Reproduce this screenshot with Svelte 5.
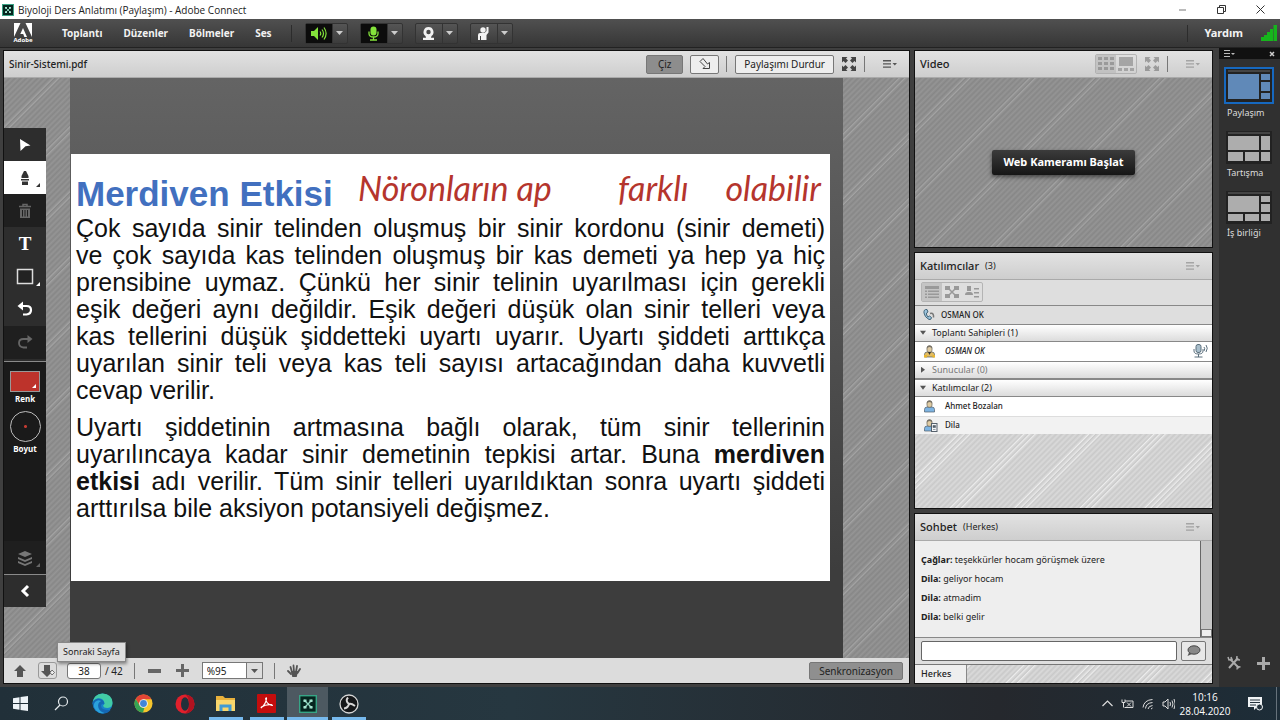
<script>
    const menus = ["Toplantı", "Düzenler", "Bölmeler", "Ses"];
    const devices = [
        { name: "Hoparlör", icon: "speaker", on: true },
        { name: "Mikrofon", icon: "mic", on: true },
        { name: "Kamera", icon: "webcam", on: false },
        { name: "El Kaldır", icon: "raise", on: false },
    ];
    const tools = [
        { name: "Seç", icon: "pointer" },
        { name: "Kalem", icon: "pen", selected: true, more: true },
        { name: "Sil", icon: "trash", off: true },
        { name: "Metin", icon: "text" },
        { name: "Şekil", icon: "rect", more: true },
        { name: "Geri Al", icon: "undo" },
        { name: "Yinele", icon: "redo", off: true },
    ];
    const messages = [
        { from: "Çağlar", text: "teşekkürler hocam görüşmek üzere" },
        { from: "Dila", text: "geliyor hocam" },
        { from: "Dila", text: "atmadim" },
        { from: "Dila", text: "belki gelir" },
    ];
    const layouts = [
        { name: "Paylaşım", boxes: [[2, 5, 31, 25], [35, 5, 9, 6], [35, 13, 9, 9], [35, 24, 9, 6]] },
        { name: "Tartışma", boxes: [[2, 5, 31, 14], [35, 5, 9, 14], [2, 21, 15, 9], [19, 21, 14, 9], [35, 21, 9, 9]] },
        { name: "İş birliği", boxes: [[2, 5, 31, 16], [35, 5, 9, 6], [35, 13, 9, 8], [2, 23, 15, 7], [19, 23, 14, 7], [35, 23, 9, 7]] },
    ];
    const apps = ["start", "search", "edge", "chrome", "opera", "folder", "acrobat", "connect", "obs"];
    const running = ["folder", "acrobat", "connect", "obs"];
    let activeLayout = $state("Paylaşım");
    let page = $state("38");
    let zoom = $state("%95");
    let draft = $state("");
</script>

{#snippet expand()}
    <svg width="14" height="14" viewBox="0 0 14 14" fill="currentColor">
        <path d="M0 0h5.500L4 1.500 6 3.500 3.500 6 1.500 4 0 5.500zM14 0v5.500L12.500 4l-2 2L8 3.500l2-2L8.500 0zM0 14V8.500L1.500 10l2-2L6 10.500l-2 2L5.500 14zM14 14H8.500l1.500-1.500-2-2L10.500 8l2 2L14 8.500z" />
    </svg>
{/snippet}

{#snippet podMenu()}
    <button class="pod_menu" aria-label="Bölme Seçenekleri">
        <svg width="14" height="8" viewBox="0 0 14 8" fill="currentColor">
            <path d="M0 0h8v1.400H0zM0 3.200h8v1.400H0zM0 6.400h8v1.400H0zM9.500 3h4.500l-2.200 2.500z" />
        </svg>
    </button>
{/snippet}

{#snippet connectLogo(size)}
    <svg width={size} height={size} viewBox="0 0 18 18">
        <rect x="0.700" y="0.700" width="16.600" height="16.600" fill="#06251f" stroke="#37a586" stroke-width="1.400" />
        <path d="M5 5l8 8M13 5l-8 8" stroke="#8fd8c0" stroke-width="1.300" />
        <path d="M4.500 4.500h3v2.500h-3zM10.500 4.500h3v2.500h-3zM4.500 11h3v2.500h-3zM10.500 11h3v2.500h-3z" fill="#a6e5d0" />
    </svg>
{/snippet}

{#snippet person(body, badge)}
    <svg width="15" height="13" viewBox="0 0 15 13">
        <path d="M1.500 12V9.500Q1.500 7 4 7h5q2.500 0 2.500 2.500V12z" fill={body} stroke="#4f5c69" stroke-width="0.700" />
        <rect x="4" y="0.800" width="5" height="6.500" rx="2.200" fill="#dfcba3" stroke="#6a6558" stroke-width="0.700" />
        <path d="M3.800 3.500Q3.800 0.500 6.500 0.500t2.700 3q-1-1.500-2.700-1.500t-2.700 1.500z" fill="#777268" />
        {#if badge == "host"}
            <path d="M5 7l1.500 3L8 7z" fill="#333" /><path d="M1 10h3v2.500H1zM9.500 10h2.500v2.500H9.500z" fill="#e9b62e" />
        {:else if badge == "device"}
            <rect x="8.500" y="4.500" width="5.500" height="8" fill="#f4f6f8" stroke="#56616c" />
            <path d="M10 6.500h2.500v2H10zM10 10.500h2.500" fill="#56616c" stroke="#56616c" stroke-width="0.600" />
        {/if}
    </svg>
{/snippet}

<div class="screen">
    <header class="titlebar">
        {@render connectLogo(12)}
        <span class="title">Biyoloji Ders Anlatımı (Paylaşım) - Adobe Connect</span>
        <button aria-label="Simge Durumuna Küçült"><svg width="9" height="9"><path d="M1 5h7" stroke="#777" /></svg></button>
        <button aria-label="Aşağı Geri Getir"><svg width="9" height="9" fill="none" stroke="#333"><path d="M.5 2.500h6v6h-6zM2.500 2.500v-2h6v6h-2" /></svg></button>
        <button aria-label="Kapat"><svg width="9" height="9"><path d="M.5.5l8 8M8.500.5l-8 8" stroke="#333" /></svg></button>
    </header>

    <nav class="menubar">
        <a class="adobe" href="#adobe">
            <svg width="18" height="14" viewBox="0 0 18 14" fill="#fff"><path d="M0 0h6.500L0 14zM11.500 0H18v14zM9 5l4 9h-2.600L9.200 11H6.300z" /></svg>
            <span>Adobe</span>
        </a>
        <div class="menus">
            {#each menus as menu}
                <button>{menu}</button>
            {/each}
        </div>
        <span class="bar"></span>
        <div class="devices">
            {#each devices as device}
                <div class="device">
                    <button class="main" class:on={device.on} aria-label={device.name}>
                        <svg width="17" height="15" viewBox="0 0 17 15">
                            {#if device.icon == "speaker"}
                                <path d="M1 5h3l4-4v13l-4-4H1z" fill="currentColor" />
                                <path d="M10 5.500q1.500 2 0 4M12 3.500q3 4 0 8M14 1.500q4.200 6 0 12" fill="none" stroke="currentColor" stroke-width="1.200" />
                            {:else if device.icon == "mic"}
                                <rect x="5.500" y="0.500" width="6" height="9" rx="3" fill="currentColor" />
                                <path d="M4 5.500v2q0 3.500 4.500 3.500t4.500-3.500v-2M8.500 11v3M5 14h7" fill="none" stroke="currentColor" stroke-width="1.300" />
                            {:else if device.icon == "webcam"}
                                <path fill-rule="evenodd" d="M8.500 1a5 5 0 0 1 3 9l-.5 1.800h3v2.200H3v-2.200h3L5.500 10a5 5 0 0 1 3-9zm0 2.800a2.200 2.200 0 1 0 0 4.400 2.200 2.200 0 0 0 0-4.400z" fill="currentColor" />
                            {:else}
                                <circle cx="8" cy="4" r="2.700" fill="currentColor" />
                                <path d="M3 14V9q0-2 2-2h4.500l2-2V1h2v5.500L11.500 9v5z" fill="currentColor" />
                                <path d="M5.500 10v4" stroke="#444" />
                            {/if}
                        </svg>
                    </button>
                    <button class="arrow" aria-label="{device.name} Seçenekleri">
                        <svg width="7" height="4"><path d="M0 0h7L3.500 4z" fill="#ccc" /></svg>
                    </button>
                </div>
            {/each}
        </div>
        <span class="bar push"></span>
        <button class="help">Yardım</button>
        <svg class="signal" width="16" height="16" viewBox="0 0 16 16" fill="#16b51c"><path d="M0 12h3v4H0zM3 10h3v6H3zM6 7h3v9H6zM9 4h3v12H9zM12.500 0H16v16h-3.500z" /></svg>
    </nav>

    <main>
        <section class="pod share">
            <div class="pod_head">
                <h2>Sinir-Sistemi.pdf</h2>
                <button class="draw">Çiz</button>
                <button class="point" aria-label="İşaretçi">
                    <svg width="14" height="14" viewBox="0 0 14 14" fill="none" stroke="#444"><path d="M5 1.500L2 4.500l5 5-2 2h6.500V5.500l-2 1.500z" /></svg>
                </button>
                <span class="sep"></span>
                <button class="stop">Paylaşımı Durdur</button>
                <button class="icon" aria-label="Tam Ekran">{@render expand()}</button>
                <span class="sep"></span>
                {@render podMenu()}
            </div>
            <div class="canvas hatch">
                <div class="tools">
                    {#each tools as tool}
                        <button class="tool" class:selected={tool.selected} class:off={tool.off} aria-label={tool.name}>
                            {#if tool.icon == "text"}
                                <span class="letter">T</span>
                            {:else}
                                <svg width="20" height="20" viewBox="0 0 20 20" fill="none" stroke="currentColor" stroke-width="1.800">
                                    {#if tool.icon == "pointer"}
                                        <path d="M5 4l10.500 6.500-5 .8L5.500 16z" fill="currentColor" stroke="none" />
                                    {:else if tool.icon == "pen"}
                                        <path d="M9 3h2l2.500 5v2h-7V8zM6 11h8v1.500H6zM7 13.500h6V17H7z" fill="currentColor" stroke="none" />
                                    {:else if tool.icon == "trash"}
                                        <path d="M4 5.500h12M8 5V3.500h4V5" stroke-width="1.500" />
                                        <path fill-rule="evenodd" d="M5 7.500h10V17H5zM7 9v6.500h1V9zM9.500 9v6.500h1V9zM12 9v6.500h1V9z" fill="currentColor" stroke="none" />
                                    {:else if tool.icon == "rect"}
                                        <rect x="2.500" y="2.500" width="15" height="14" stroke="#ddd" stroke-width="1.500" fill="#222" />
                                    {:else if tool.icon == "undo"}
                                        <path d="M6 6h5.500q4.500 0 4.500 4t-4.500 4.500H8" stroke-width="2.200" /><path d="M2.500 6L8 1.500v9z" fill="currentColor" stroke="none" />
                                    {:else}
                                        <path d="M14 6H8.500Q4 6 4 10t4.500 4.500H12" /><path d="M17.500 6L12.500 2v8z" fill="currentColor" stroke="none" />
                                    {/if}
                                </svg>
                            {/if}
                            {#if tool.more}<i class="corner"></i>{/if}
                        </button>
                    {/each}
                    <div class="pens">
                        <button class="pen"><span class="swatch"><i class="corner"></i></span>Renk</button>
                        <button class="pen"><span class="size"></span>Boyut</button>
                        <button class="tool off layers" aria-label="Katmanlar">
                            <svg width="16" height="16" viewBox="0 0 16 16" fill="#777"><path d="M8 1l7 3-7 3-7-3zM1 7l7 3 7-3v2l-7 3-7-3zM1 11l7 3 7-3v2l-7 3-7-3z" /></svg>
                            <i class="corner"></i>
                        </button>
                    </div>
                    <button class="tool collapse" aria-label="Araçları Gizle">
                        <svg width="12" height="14" viewBox="0 0 12 14"><path d="M9 2L4 7l5 5" fill="none" stroke="#fff" stroke-width="3" /></svg>
                    </button>
                </div>
                <div class="viewer">
                    <article class="slide">
                        <h1>Merdiven Etkisi</h1>
                        <div class="ink"><span>Nöronların ap</span><span>farklı</span><span>olabilir</span></div>
                        <p>
                            Çok sayıda sinir telinden oluşmuş bir sinir kordonu (sinir demeti)<br />
                            ve çok sayıda kas telinden oluşmuş bir kas demeti ya hep ya hiç<br />
                            prensibine uymaz. Çünkü her sinir telinin uyarılması için gerekli<br />
                            eşik değeri aynı değildir. Eşik değeri düşük olan sinir telleri veya<br />
                            kas tellerini düşük şiddetteki uyartı uyarır. Uyartı şiddeti arttıkça<br />
                            uyarılan sinir teli veya kas teli sayısı artacağından daha kuvvetli
                            <span class="last">cevap verilir.</span>
                        </p>
                        <p>
                            Uyartı şiddetinin artmasına bağlı olarak, tüm sinir tellerinin<br />
                            uyarılıncaya kadar sinir demetinin tepkisi artar. Buna <b>merdiven</b><br />
                            <b>etkisi</b> adı verilir. Tüm sinir telleri uyarıldıktan sonra uyartı şiddeti
                            <span class="last">arttırılsa bile aksiyon potansiyeli değişmez.</span>
                        </p>
                    </article>
                </div>
            </div>
            <div class="pod_foot">
                <button class="step" aria-label="Önceki Sayfa"><svg width="12" height="12" viewBox="0 0 12 12"><path d="M6 0l6 6H9v6H3V6H0z" fill="#555" /></svg></button>
                <div class="next">
                    <button class="step hover" aria-label="Sonraki Sayfa"><svg width="14" height="12" viewBox="0 0 14 12"><path d="M6 12L0 6h3V0h6v6h3z" fill="#555" /><path d="M11 5l2.500 2.500L11 10 9 7.500z" fill="#eee" stroke="#444" stroke-width="0.700" /></svg></button>
                    <span class="tooltip" role="tooltip">Sonraki Sayfa</span>
                </div>
                <input class="page" aria-label="Sayfa" bind:value={page} />
                <span class="total">/ 42</span>
                <span class="sep"></span>
                <button class="zoom_btn" aria-label="Uzaklaştır"><svg width="13" height="13"><path d="M0 5h13v4H0z" fill="#666" /></svg></button>
                <button class="zoom_btn" aria-label="Yakınlaştır"><svg width="13" height="13"><path d="M5 0h3v5h5v3H8v5H5V8H0V5h5z" fill="#666" /></svg></button>
                <div class="combo">
                    <select aria-label="Yakınlaştırma" bind:value={zoom}>
                        <option>%95</option>
                        <option>%100</option>
                    </select>
                    <svg width="7" height="4"><path d="M0 0h7L3.500 4z" fill="#555" /></svg>
                </div>
                <span class="sep"></span>
                <button class="step" aria-label="Kaydır">
                    <svg width="14" height="14" viewBox="0 0 14 14" fill="none" stroke="#555" stroke-width="1.800" stroke-linecap="round"><path d="M3.500 3L5 8M6.500 1.500L7 8M10 2L9 8M13 5l-2.500 4M1 7l3 3" /><path d="M5 8h5l-1 4H6z" fill="#555" /></svg>
                </button>
                <button class="sync">Senkronizasyon</button>
            </div>
        </section>

        <div class="side">
            <section class="pod video">
                <div class="pod_head">
                    <h2>Video</h2>
                    <div class="views dim">
                        <button class="sel" aria-label="Izgara"><svg width="16" height="14" fill="#8b8b8b"><path d="M0 0h4v3H0zM6 0h4v3H6zM12 0h4v3h-4zM0 5h4v3H0zM6 5h4v3H6zM12 5h4v3h-4zM0 10h4v3H0zM6 10h4v3H6zM12 10h4v3h-4z" /></svg></button>
                        <button aria-label="Film Şeridi"><svg width="16" height="14" fill="#999"><path d="M1 0h14v9H1zM0 11h4v3H0zM6 11h4v3H6zM12 11h4v3h-4z" /></svg></button>
                    </div>
                    <button class="icon faint" aria-label="Videoyu Tam Ekran Yap">{@render expand()}</button>
                    <span class="sep"></span>
                    <div class="faint">{@render podMenu()}</div>
                </div>
                <div class="stage hatch"><button class="webcam">Web Kameramı Başlat</button></div>
            </section>

            <section class="pod people">
                <div class="pod_head">
                    <h2>Katılımcılar</h2><small>(3)</small>
                    <div class="faint">{@render podMenu()}</div>
                </div>
                <div class="people_bar">
                    <div class="views dim">
                        <button class="sel" aria-label="Liste"><svg width="16" height="14" fill="#888"><path d="M1 1h14v3H1zM1 5.500h2v1.500H1zM4 5.500h11v1.500H4zM1 8.500h2V10H1zM4 8.500h11V10H4zM1 11.500h2V13H1zM4 11.500h11V13H4z" /></svg></button>
                        <button aria-label="Çalışma Odaları"><svg width="16" height="14" fill="#888"><path d="M1 1h5v4H1zM10 1h5v4h-5zM1 9h5v4H1zM10 9h5v4h-5z" /><path d="M4 3l8 8M12 3l-8 8" stroke="#888" stroke-width="1.500" /></svg></button>
                        <button aria-label="Durum"><svg width="16" height="14" fill="#888"><path d="M3 1h4v5H3zM1 10q0-3 3-3h2q3 0 3 3zM10 3h5v1.500h-5zM10 7h5v1.500h-5zM10 11h5v1.500h-5z" /></svg></button>
                    </div>
                </div>
                <div class="speaking">
                    <svg width="13" height="13" viewBox="0 0 13 13" fill="none"><path d="M5 1.500Q1.500 1 2 5t5 6.500q2.500.5 2.500-2L7.500 8 6 9Q4 7 4.500 5L6 4z" fill="#9cc4dd" stroke="#416479" /><path d="M8 5.500q3-1 3.500 2v2" stroke="#777" stroke-width="1.500" /></svg>
                    OSMAN OK
                </div>
                <button class="group"><i class="open"></i>Toplantı Sahipleri (1)</button>
                <div class="member host">
                    {@render person("#e3bd62", "host")}<span>OSMAN OK</span>
                    <svg width="15" height="14" viewBox="0 0 15 14" fill="none" stroke="#5b6f7d"><rect x="3" y="0.500" width="5" height="8" rx="2" fill="#a9bfcc" /><path d="M1 5v2q0 3 4.500 3T10 7V5M5.500 10v3M1.500 13h8M11 3q1.500 1.500 0 4M13 1q2.500 3 0 7" /></svg>
                </div>
                <button class="group empty"><i></i>Sunucular (0)</button>
                <button class="group"><i class="open"></i>Katılımcılar (2)</button>
                <div class="member">{@render person("#7eb4e2", "")}<span>Ahmet Bozalan</span></div>
                <div class="member alt">{@render person("#7eb4e2", "device")}<span>Dila</span></div>
                <div class="rest hatch light"></div>
            </section>

            <section class="pod chat">
                <div class="pod_head">
                    <h2>Sohbet</h2><small>(Herkes)</small>
                    <div class="faint">{@render podMenu()}</div>
                </div>
                <div class="log">
                    <div class="messages">
                        {#each messages as message}
                            <p><b>{message.from}:</b> {message.text}</p>
                        {/each}
                    </div>
                    <div class="scroll"><span></span></div>
                </div>
                <form class="compose">
                    <input aria-label="Mesaj" bind:value={draft} />
                    <button type="button" aria-label="Gönder"><svg width="15" height="12" viewBox="0 0 15 12"><ellipse cx="8" cy="5" rx="6" ry="4.200" fill="#888" stroke="#444" /><path d="M3 7.500L1.500 11 6 9z" fill="#555" /></svg></button>
                </form>
                <div class="tabs hatch light"><button>Herkes</button></div>
            </section>
        </div>

        <aside class="rail">
            <div class="rail_head">
                <button aria-label="Düzen Menüsü"><svg width="11" height="7" fill="#bbb"><path d="M0 0h6v1H0zM0 3h6v1H0zM0 6h6v1H0zM7 3h4L9 5z" /></svg></button>
                <button aria-label="Düzen Çubuğunu Kapat"><svg width="6" height="6"><path d="M1 1l4 4M5 1L1 5" stroke="#ccc" stroke-width="1.500" /></svg></button>
            </div>
            <div class="layouts">
                {#each layouts as layout}
                    <button class="layout" class:active={activeLayout == layout.name} onclick={() => (activeLayout = layout.name)}>
                        <svg width="46" height="33" viewBox="0 0 46 33">
                            <rect width="46" height="33" fill="#222" />
                            <path d="M2 2h42" stroke="#666" />
                            {#each layout.boxes as [x, y, w, h]}
                                <rect {x} {y} width={w} height={h} />
                            {/each}
                        </svg>
                        <span>{layout.name}</span>
                    </button>
                {/each}
            </div>
            <div class="rail_foot">
                <button aria-label="Ayarlar"><svg width="14" height="14" viewBox="0 0 14 14" fill="none" stroke="#aaa" stroke-width="2"><path d="M3 3l9 9M11 2L2 12" /><path d="M1 1l1 3 3-.5L4 1M10 0l-.5 3.500L13 4M10 13.500l.5-3 3 .5" stroke-width="1.500" /></svg></button>
                <button aria-label="Ekle"><svg width="13" height="13"><path d="M5 0h3v5h5v3H8v5H5V8H0V5h5z" fill="#aaa" /></svg></button>
            </div>
        </aside>
    </main>

    <footer class="taskbar">
        {#each apps as app}
            <button class="app" class:running={running.includes(app)} class:current={app == "connect"} aria-label={app}>
                {#if app == "start"}
                    <svg width="15" height="15" viewBox="0 0 15 15" fill="#eef4f8"><path d="M0 2.200l6.500-1V7H0zM7.500 1L15 0v7H7.500zM0 8h6.500v5.800l-6.500-1zM7.500 8H15v7l-7.500-1z" /></svg>
                {:else if app == "search"}
                    <svg width="15" height="15" viewBox="0 0 15 15" fill="none" stroke="#e5eaed" stroke-width="1.200"><circle cx="9" cy="5.500" r="4.500" /><path d="M6 9L1 14" /></svg>
                {:else if app == "edge"}
                    <svg width="21" height="21" viewBox="0 0 21 21">
                        <circle cx="10.500" cy="10.500" r="10" fill="#1681c9" />
                        <path d="M.7 9Q2 1 10.500.5 20 1 20.500 9.500q0 5-5 5.500-4 0-4.500-2.500 2-1 1-4Q10 4.500 5 5.500 2 6.500.7 9z" fill="#42cba5" />
                        <path d="M.6 9.500Q3 5 8 6q4 1 4.500 5-3-1-3.500 1.500 0 5 9.500 4.500-3 4-8.500 3.500Q1 19 .6 9.500z" fill="#1467b3" />
                        <path d="M9 8Q5 10 6.500 15q1.500 4 6 5-5 1-8.500-2.500Q0 13 3 9q3-3 6-1z" fill="#2aa1dc" />
                    </svg>
                {:else if app == "chrome"}
                    <svg width="19" height="19" viewBox="0 0 20 20">
                        <circle cx="10" cy="10" r="9.500" fill="#f6c62d" />
                        <path d="M1.800 5.200A9.500 9.500 0 0 1 18.300 5.500H10L6 12z" fill="#e24435" />
                        <path d="M1.800 5.200L6 12.200q1.500 2.500 5 2.300L9.500 19.500A9.500 9.500 0 0 1 1.800 5.200z" fill="#35a355" />
                        <circle cx="10" cy="10" r="4.600" fill="#f2f2f2" /><circle cx="10" cy="10" r="3.600" fill="#4285d8" />
                    </svg>
                {:else if app == "opera"}
                    <svg width="20" height="20" viewBox="0 0 20 20"><circle cx="10" cy="10" r="9.500" fill="#e0202c" /><path d="M10 .5a9.500 9.500 0 0 1 0 19q4-2 4-9.500T10 .5z" fill="#b01220" /><ellipse cx="10" cy="10" rx="4" ry="6.800" fill="#22303a" /></svg>
                {:else if app == "folder"}
                    <svg width="19" height="17" viewBox="0 0 19 17"><path d="M0 1h7l2 2h10v13H0z" fill="#e8b13c" /><path d="M0 5h19v11H0z" fill="#f9d76d" /><path d="M3.500 16V9.500h12V16h-3v-3.500h-6V16z" fill="#3f9bd6" /></svg>
                {:else if app == "acrobat"}
                    <svg width="19" height="19" viewBox="0 0 19 19"><rect width="19" height="19" rx="1" fill="#c40d0d" /><path d="M4 14Q9 10 9.500 4.500q0-1.500-.8 0Q9 10 15 11.500q1 0-.5-.8Q9 10 4.500 13z" fill="none" stroke="#fff" stroke-width="1.200" /></svg>
                {:else if app == "connect"}
                    {@render connectLogo(18)}
                {:else}
                    <svg width="20" height="20" viewBox="0 0 20 20"><circle cx="10" cy="10" r="9" fill="#151719" stroke="#d6d6d6" stroke-width="1.300" /><path d="M9 3.500q-3 3.500 1 6.500M16 12q-4-3-6-2M5 14.500q4-.5 5-4.500" fill="none" stroke="#d6d6d6" stroke-width="2" /></svg>
                {/if}
            </button>
        {/each}
        <div class="tray">
            <svg width="11" height="7" fill="none" stroke="#ddd" stroke-width="1.200"><path d="M.5 6l5-5 5 5" /></svg>
            <svg width="13" height="10" viewBox="0 0 13 10" fill="none" stroke="#ddd"><path d="M4 2h8v6.500H3.500M6 3.500l4 4M10 3.500l-4 4M1 .5v3h3v-3M2.500 3.500v5" /></svg>
            <svg width="12" height="12" viewBox="0 0 12 12" fill="none" stroke="#ddd"><path d="M1 9.500Q2 2 10.500 1.500M3.500 10.500Q4 5 10.500 4.500M6 11q.5-3 4.500-3.500M9 11l1.500-1" /></svg>
            <svg width="13" height="12" viewBox="0 0 13 12" fill="none" stroke="#ddd"><path d="M1 4h2l3-3v10L3 8H1zM8 4q1 2 0 4M10 2.500q2 3.500 0 7M12 1q2.500 5 0 10" /></svg>
        </div>
        <time class="clock"><span>10:16</span><span>28.04.2020</span></time>
        <button class="notes" aria-label="Bildirimler">
            <svg width="15" height="14" viewBox="0 0 15 14"><path d="M0 0h14v10H9l-3 3v-3H0z" fill="#f0f3f5" /><path d="M2 3h10M2 5.500h10M2 8h6" stroke="#24323c" /><circle cx="11.500" cy="10" r="3" fill="#24323c" stroke="#f0f3f5" /></svg>
        </button>
    </footer>
</div>

<style>
    :global(body) {
        margin: 0;
        background: #3f3f3f;
    }

    * {
        box-sizing: border-box;
    }

    .screen {
        display: flex;
        flex-direction: column;
        min-height: 100vh;
        font-family: "Noto Sans", "Open Sans", sans-serif;
        font-size: 10px;
        line-height: 14px;
        color: #222;
    }

    button,
    input,
    select {
        font: inherit;
        color: inherit;
    }

    button {
        display: flex;
        align-items: center;
        justify-content: center;
        padding: 0;
        border: 0;
        background: none;
        white-space: nowrap;
        cursor: pointer;
    }

    svg {
        display: block;
        flex: none;
    }

    h1,
    h2,
    p {
        margin: 0;
    }

    .hatch {
        background:
            repeating-linear-gradient(135deg, #fff0 0 34px, #fff3 35px, #fff0 36px 38px, #fff3 39px, #fff0 40px 46px),
            repeating-linear-gradient(135deg, #878787, #959595 2px, #878787 4px);
    }

    .hatch.light {
        background:
            repeating-linear-gradient(135deg, #fff0 0 30px, #fff9 31px, #fff0 32px 34px, #fff9 35px, #fff0 36px 38px, #fff9 39px, #fff0 40px 46px),
            repeating-linear-gradient(135deg, #c9c9c9, #dadada 2px, #c9c9c9 4px);
    }

    .titlebar {
        display: flex;
        align-items: center;
        height: 19px;
        padding-left: 2px;
        background: #fff;
        font-family: "Open Sans", sans-serif;
    }

    .title {
        flex: 1;
        margin-left: 4px;
    }

    .titlebar button {
        width: 39px;
        height: 19px;
    }

    .menubar {
        display: flex;
        align-items: center;
        height: 29px;
        padding: 0 3px 0 13px;
        background: linear-gradient(#505050, #363636);
        border-bottom: 1px solid #222;
        color: #f2f2f2;
        font-weight: bold;
    }

    .adobe {
        display: flex;
        flex-direction: column;
        align-items: center;
        width: 20px;
        color: #fff;
        font-size: 6px;
        line-height: 7px;
        text-decoration: none;
    }

    .menus {
        display: flex;
        gap: 21px;
        margin: 0 19px 0 29px;
    }

    .bar {
        width: 1px;
        height: 17px;
        background: #2c2c2c;
    }

    .devices {
        display: flex;
        gap: 12px;
        margin-left: 13px;
    }

    .device {
        display: flex;
        border: 1px solid #333;
        border-radius: 2px;
        background: linear-gradient(#555, #3c3c3c);
    }

    .device .main {
        width: 27px;
        height: 19px;
        border-right: 1px solid #333;
    }

    .device .on {
        background: #0c0c0c;
        color: #84e33b;
    }

    .device .arrow {
        width: 14px;
    }

    .push {
        margin-left: auto;
    }

    .help {
        margin: 0 18px 0 16px;
        font-size: 11px;
    }

    main {
        flex: 1;
        display: grid;
        grid-template-columns: minmax(0, 1fr) 305px 61px;
        padding-left: 3px;
        background: #3f3f3f;
    }

    .pod {
        display: flex;
        flex-direction: column;
        min-width: 0;
        border: 1px solid #111;
    }

    .share {
        margin: 2px 4px 3px 0;
    }

    .pod_head {
        display: flex;
        align-items: center;
        height: 27px;
        padding: 0 12px 0 5px;
        background: linear-gradient(#e2e2e2, #cecece);
        border-bottom: 1px solid #aaa;
    }

    h2 {
        font-size: 11px;
        font-weight: 500;
        line-height: 14px;
    }

    .share h2,
    .video h2 {
        margin-right: auto;
    }

    .share h2 {
        font-size: 10px;
    }

    small {
        margin: 0 auto 0 6px;
        font-size: 9px;
    }

    .pod_menu {
        width: 14px;
        height: 18px;
        color: #555;
    }

    .faint {
        opacity: 0.4;
    }

    .sep {
        width: 1px;
        height: 16px;
        background: #777;
    }

    .draw,
    .point,
    .stop,
    .sync {
        height: 19px;
        border: 1px solid #777;
        border-radius: 2px;
        background: #eee;
    }

    .draw {
        width: 37px;
        margin-right: 7px;
        background: #8d8d8d;
    }

    .point {
        width: 29px;
        margin-right: 7px;
    }

    .stop {
        padding: 0 8px;
        margin: 0 8px;
    }

    .icon {
        margin-right: 8px;
        color: #444;
    }

    .share .pod_menu {
        margin-left: 18px;
    }

    .canvas {
        position: relative;
        flex: 1;
        display: flex;
        padding: 0 66px;
    }

    .viewer {
        flex: 1;
        min-width: 0;
        padding: 76px 13px 20px 1px;
        background: linear-gradient(#646464, #3d3d3d 85%);
    }

    .slide {
        position: relative;
        padding: 18px 5px 49px;
        background: #fff;
        color: #111;
        font-family: "Liberation Sans", Arial, sans-serif;
    }

    .slide h1 {
        color: #4270bf;
        font-size: 35px;
        line-height: 43px;
    }

    .slide p {
        margin-bottom: 10px;
        font-size: 25px;
        line-height: 27px;
        text-align: justify;
        text-align-last: justify;
    }

    .last {
        display: block;
        text-align-last: left;
    }

    .ink {
        position: absolute;
        top: 14px;
        left: 287px;
        right: 9px;
        display: grid;
        grid-template-columns: 260px 1fr auto;
        color: #b5352d;
        font: italic 34px/40px Lato, cursive;
        white-space: nowrap;
    }

    .tools {
        position: absolute;
        top: 50px;
        left: 0;
        display: flex;
        flex-direction: column;
        width: 42px;
        background: #2d2d2d;
        color: #fff;
    }

    .tool {
        position: relative;
        height: 33px;
    }

    .tool.selected {
        background: #fff;
        color: #333;
    }

    .tool.off {
        background: #1f1f1f;
        color: #666;
    }

    .letter {
        font: bold 19px/20px "Liberation Serif", serif;
    }

    .corner {
        position: absolute;
        right: 6px;
        bottom: 7px;
        border: 2px solid transparent;
        border-right-color: currentColor;
        border-bottom-color: currentColor;
    }

    .pens {
        display: flex;
        flex-direction: column;
        align-items: center;
        height: 214px;
        margin-top: 2px;
        padding-top: 9px;
        border: 1px solid #8a8a8a;
        border-width: 1px 0;
        background: #1a1a1a;
    }

    .pen {
        flex-direction: column;
        margin-bottom: 6px;
        font-size: 8px;
        font-weight: bold;
        line-height: 13px;
    }

    .swatch {
        position: relative;
        width: 30px;
        height: 21px;
        border: 1px solid #999;
        background: #bd332b;
    }

    .swatch .corner {
        right: 3px;
        bottom: 3px;
    }

    .size {
        width: 31px;
        height: 31px;
        border: 1px solid #bbb;
        border-radius: 50%;
        background: radial-gradient(circle, #c23a31 0 1px, transparent 2px);
    }

    .layers {
        width: 42px;
        margin-top: auto;
    }

    .tool.collapse {
        height: 32px;
    }

    .pod_foot {
        display: flex;
        align-items: center;
        height: 25px;
        padding: 0 6px;
        background: #dcdcdc;
    }

    .step {
        width: 19px;
        height: 17px;
        border-radius: 3px;
    }

    .hover {
        border: 1px solid #999;
    }

    .next {
        position: relative;
        margin: 0 10px 0 9px;
    }

    .tooltip {
        position: absolute;
        bottom: 17px;
        left: 19px;
        padding: 2px 5px;
        border: 1px solid #888;
        background: #dedede;
        box-shadow: 1px 2px 3px #0006;
        font-size: 9px;
        white-space: nowrap;
    }

    .page {
        width: 34px;
        height: 16px;
        padding: 0;
        border: 1px solid #777;
        border-radius: 3px;
        background: #fff;
        text-align: center;
    }

    .total {
        margin: 0 11px 0 4px;
    }

    .zoom_btn {
        margin-left: 13px;
    }

    .zoom_btn + .zoom_btn {
        margin-left: 15px;
    }

    .combo {
        position: relative;
        width: 61px;
        margin: 0 11px 0 13px;
    }

    .combo select {
        display: block;
        width: 100%;
        height: 17px;
        padding: 0 4px;
        border: 1px solid #777;
        border-radius: 0;
        appearance: none;
        background: linear-gradient(90deg, #fff 43px, #777 43px 44px, #ddd 44px);
    }

    .combo svg {
        position: absolute;
        right: 5px;
        top: 7px;
        pointer-events: none;
    }

    .sep + .step {
        margin-left: 10px;
    }

    .sync {
        height: 18px;
        margin-left: auto;
        padding: 0 9px;
        background: #8f8f8f;
    }

    .side {
        display: grid;
        grid-template-rows: 198fr 258fr 171fr;
        gap: 4px;
        margin-right: 6px;
        padding: 2px 0 3px;
    }

    .views {
        display: flex;
        border: 1px solid #aaa;
        border-radius: 2px;
    }

    .views button {
        width: 20px;
        height: 18px;
    }

    .views .sel {
        background: #bebebe;
    }

    .dim {
        opacity: 0.8;
    }

    .video .icon {
        margin-left: 8px;
    }

    .video .faint:last-child {
        margin-left: 18px;
    }

    .stage {
        flex: 1;
        display: flex;
        align-items: center;
        justify-content: center;
    }

    .webcam {
        height: 25px;
        padding: 0 11px;
        border-radius: 2px;
        background: linear-gradient(#3b3b3b, #161616);
        box-shadow: 0 2px 4px #0008;
        color: #fff;
        font-size: 11px;
        font-weight: bold;
    }

    .people_bar {
        display: flex;
        align-items: center;
        height: 26px;
        padding-left: 6px;
        background: #dedede;
        border-bottom: 1px solid #888;
    }

    .speaking,
    .member,
    .group {
        display: flex;
        align-items: center;
        height: 18px;
        font-size: 9px;
    }

    .speaking {
        gap: 6px;
        padding-left: 7px;
        background: #dedede;
        font-weight: 500;
        font-size: 8px;
    }

    .group {
        justify-content: flex-start;
        gap: 6px;
        padding-left: 5px;
        border: 1px solid #888;
        border-width: 1px 0;
        background: linear-gradient(#fff, #dcdcdc);
    }

    .group i {
        width: 6px;
        height: 6px;
        background: #555;
        clip-path: polygon(1px 0, 5px 3px, 1px 6px);
    }

    .group i.open {
        clip-path: polygon(0 1px, 6px 1px, 3px 5px);
    }

    .empty {
        color: #777;
    }

    .member {
        gap: 7px;
        height: 19px;
        padding: 0 4px 0 8px;
        background: #fff;
        font-weight: 500;
        font-size: 8px;
    }

    .member span {
        flex: 1;
    }

    .host span {
        font-style: italic;
    }

    .alt {
        height: 18px;
        background: #f2f2f2;
        border-top: 1px solid #ddd;
    }

    .rest {
        flex: 1;
    }

    .log {
        flex: 1;
        display: flex;
        background: #eee;
        border-bottom: 1px solid #888;
    }

    .messages {
        flex: 1;
        padding: 9px 6px 0;
        font-size: 9px;
    }

    .messages p {
        line-height: 19px;
    }

    .scroll {
        display: flex;
        align-items: flex-end;
        width: 12px;
        border-left: 1px solid #666;
        background: #c7c7c7;
    }

    .scroll span {
        flex: 1;
        height: 8px;
        border: 1px solid #777;
        background: #eee;
    }

    .compose {
        display: flex;
        gap: 4px;
        height: 26px;
        padding: 3px 6px;
        background: #dedede;
    }

    .compose input {
        flex: 1;
        min-width: 0;
        border: 1px solid #666;
        border-radius: 2px;
        background: #fff;
    }

    .compose button {
        width: 25px;
        border: 1px solid #777;
        border-radius: 2px;
        background: #e8e8e8;
    }

    .tabs {
        display: flex;
        height: 19px;
        border-top: 1px solid #777;
    }

    .tabs button {
        width: 52px;
        padding-left: 6px;
        justify-content: flex-start;
        border-right: 1px solid #888;
        background: #eee;
        font-size: 9px;
        font-weight: 500;
    }

    .rail {
        display: flex;
        flex-direction: column;
        background: #303030;
        color: #ddd;
    }

    .rail_head {
        display: flex;
        justify-content: space-between;
        height: 11px;
        padding: 0 5px;
        background: #111;
    }

    .layouts {
        display: flex;
        flex-direction: column;
        gap: 9px;
        padding: 8px 5px;
    }

    .layout {
        flex-direction: column;
        align-items: flex-start;
        font-size: 9px;
    }

    .layout svg {
        margin: 2px;
        fill: #adadad;
    }

    .layout span {
        margin-left: 3px;
    }

    .layout.active svg {
        fill: #6089b8;
        outline: 2px solid #1668bf;
    }

    .layout.active span {
        margin-top: 2px;
    }

    .rail_foot {
        display: flex;
        justify-content: space-between;
        margin-top: auto;
        padding: 0 10px 17px 8px;
    }

    .taskbar {
        display: flex;
        height: 33px;
        padding-right: 3px;
        background: linear-gradient(90deg, #213039, #263740 40%, #25282d 78%, #1d2d38);
        color: #fff;
    }

    .app {
        width: 41px;
        border: 3px solid transparent;
        border-width: 3px 0;
    }

    .running {
        border-image: linear-gradient(90deg, transparent 4px, #76b9ed 4px 38px, transparent 38px) 0 0 3 0;
    }

    .current {
        background: #4d5961;
        border-image: none;
        border-color: transparent transparent #76b9ed;
    }

    .tray {
        display: flex;
        align-items: center;
        gap: 8px;
        margin-left: auto;
    }

    .clock {
        display: flex;
        flex-direction: column;
        align-items: center;
        justify-content: center;
        width: 60px;
        font-family: "Open Sans", sans-serif;
        font-size: 10px;
        line-height: 14px;
    }

    .notes {
        width: 42px;
        border-right: 1px solid #66727b;
    }
</style>
